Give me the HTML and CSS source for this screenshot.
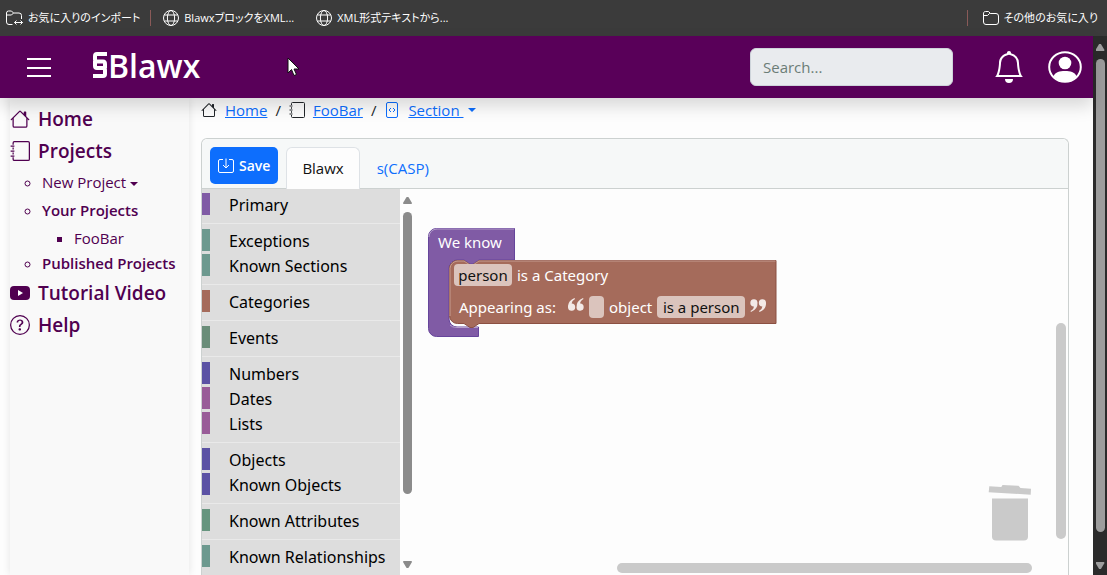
FILE: index.html
```html
<!DOCTYPE html>
<html lang="en">
<head>
<meta charset="utf-8">
<title>Blawx</title>
<link rel="stylesheet" href="styles.css">
</head>
<body>
<svg class="defs" aria-hidden="true">
  <symbol id="house" viewBox="0 0 16 16"><path d="M8.707 1.5a1 1 0 0 0-1.414 0L.646 8.146a.5.5 0 0 0 .708.708L2 8.207V13.500A1.500 1.500 0 0 0 3.500 15h9a1.500 1.500 0 0 0 1.500-1.500V8.207l.646.647a.5.5 0 0 0 .708-.708L13 5.793V2.500a.5.5 0 0 0-.5-.5h-1a.5.5 0 0 0-.5.5v1.293zM13 7.207V13.500a.5.5 0 0 1-.5.5h-9a.5.5 0 0 1-.5-.5V7.207l5-5z" fill="currentColor"/></symbol>
  <symbol id="journal" viewBox="0 0 16 16"><path d="M2.500 3V1.500a1 1 0 0 1 1-1h11a1 1 0 0 1 1 1v13a1 1 0 0 1-1 1h-11a1 1 0 0 1-1-1V13M2.500 5.200v1.600M2.500 9.200v1.600M.5 4h3M.5 8h3M.5 12h3" fill="none" stroke="currentColor"/></symbol>
  <symbol id="globe" viewBox="0 0 16 16"><g fill="none" stroke="currentColor"><circle cx="8" cy="8" r="7.500"/><ellipse cx="8" cy="8" rx="3.600" ry="7.500"/><path d="M1.300 5h13.400M1.300 11h13.400"/></g></symbol>
</svg>

<nav class="bookmarks" aria-label="Bookmarks">
  <a href="#" class="bookmark">
    <svg width="17" height="16" viewBox="0 0 17 16" fill="none" stroke="currentColor"><path d="M6.500 14.500H3A2.500 2.500 0 0 1 .5 12V3A2 2 0 0 1 2.500 1h3l2 2H13A2.500 2.500 0 0 1 15.500 5.500V9M.5 5h5l2-2M8.500 12.500h8M10.500 10.500l-2 2 2 2M14.500 10.500l2 2-2 2"/></svg>
    <span>お気に入りのインポート</span>
  </a>
  <span class="divider"></span>
  <a href="#" class="bookmark"><svg width="16" height="16"><use href="#globe"/></svg><span>BlawxブロックをXML...</span></a>
  <a href="#" class="bookmark spaced"><svg width="16" height="16"><use href="#globe"/></svg><span>XML形式テキストから...</span></a>
  <span class="divider last"></span>
  <a href="#" class="bookmark">
    <svg width="16" height="16" viewBox="0 0 16 16" fill="none" stroke="currentColor"><path d="M.5 4A2 2 0 0 1 2.500 1.500h3l2 2H13A2.500 2.500 0 0 1 15.500 6v6a2.500 2.500 0 0 1-2.500 2.500H3A2.500 2.500 0 0 1 .5 12zM.5 5.500h4l2-2h1"/></svg>
    <span>その他のお気に入り</span>
  </a>
</nav>

<div class="window">
  <div class="page">
    <header class="topbar">
      <button class="icon-button menu" aria-label="Menu"><svg width="24" height="20" viewBox="0 0 24 20" stroke="currentColor" stroke-width="2"><path d="M0 2h24M0 11h24M0 19h24"/></svg></button>
      <a href="#" class="brand">
        <svg width="16" height="26" viewBox="0 0 16 26" fill="none" stroke="currentColor" stroke-width="4"><path d="M15 2H5Q3 2 3 4V7.500Q3 9.500 5 9.500H11Q13 9.500 13 12V16M3 9V14Q3 16 5 16H11Q13 16 13 18V22Q13 24 11 24H1"/></svg>
        <span>Blawx</span>
      </a>
      <input class="search" type="search" placeholder="Search..." aria-label="Search">
      <button class="icon-button bell" aria-label="Notifications"><svg width="32" height="32" viewBox="0 0 16 16" fill="currentColor"><path d="M8 16a2 2 0 0 0 2-2H6a2 2 0 0 0 2 2M8 1.918l-.797.161A4 4 0 0 0 4 6c0 .628-.134 2.197-.459 3.742-.16.767-.376 1.566-.663 2.258h10.244c-.287-.692-.502-1.490-.663-2.258C12.134 8.197 12 6.628 12 6a4 4 0 0 0-3.203-3.920zM14.220 12c.223.447.481.801.780 1H1c.299-.199.557-.553.780-1C2.680 10.200 3 6.880 3 6c0-2.420 1.720-4.440 4.005-4.901a1 1 0 1 1 1.990 0A5 5 0 0 1 13 6c0 .880.320 4.200 1.220 6"/></svg></button>
      <button class="icon-button" aria-label="Account"><svg width="34" height="32" viewBox="0 0 34 32"><ellipse cx="17" cy="16" rx="15.800" ry="14.800" fill="none" stroke="currentColor" stroke-width="2"/><circle cx="17" cy="12" r="6.300" fill="currentColor"/><path d="M5.500 25c2-4 6-5 11.500-5s9.500 1 11.500 5c-3 4-7 5.500-11.500 5.500S8.500 29 5.500 25z" fill="currentColor"/></svg></button>
    </header>

    <div class="columns">
      <aside class="sidebar">
        <a href="#" class="side-link"><svg width="20" height="20"><use href="#house"/></svg>Home</a>
        <a href="#" class="side-link"><svg width="20" height="20"><use href="#journal"/></svg>Projects</a>
        <ul class="side-list">
          <li><a href="#">New Project<span class="caret"></span></a></li>
          <li><a href="#" class="strong">Your Projects</a>
            <ul class="side-sublist"><li><a href="#">FooBar</a></li></ul>
          </li>
          <li><a href="#" class="strong">Published Projects</a></li>
        </ul>
        <a href="#" class="side-link"><svg width="20" height="20" viewBox="0 0 20 20"><rect y="3" width="20" height="14" rx="4" fill="currentColor"/><path d="M8 7v6l5-3z" fill="#fff"/></svg>Tutorial Video</a>
        <a href="#" class="side-link"><svg width="20" height="20" viewBox="0 0 16 16" fill="currentColor"><path d="M8 15A7 7 0 1 1 8 1a7 7 0 0 1 0 14m0 1A8 8 0 1 0 8 0a8 8 0 0 0 0 16"/><path d="M5.255 5.786a.237.237 0 0 0 .241.247h.825c.138 0 .248-.113.266-.250.090-.656.540-1.134 1.342-1.134.686 0 1.314.343 1.314 1.168 0 .635-.374.927-.965 1.371-.673.489-1.206 1.060-1.168 1.987l.003.217a.250.250 0 0 0 .250.246h.811a.250.250 0 0 0 .250-.250v-.105c0-.718.273-.927 1.010-1.486.609-.463 1.244-.977 1.244-2.056 0-1.511-1.276-2.241-2.673-2.241-1.267 0-2.655.590-2.750 2.286m1.557 5.763c0 .533.425.927 1.010.927.609 0 1.028-.394 1.028-.927 0-.552-.420-.940-1.029-.940-.584 0-1.009.388-1.009.940"/></svg>Help</a>
      </aside>

      <main class="main">
        <nav class="crumbs" aria-label="Breadcrumb">
          <svg width="16" height="16"><use href="#house"/></svg><a href="#">Home</a>
          <span class="slash">/</span>
          <svg width="16" height="16"><use href="#journal"/></svg><a href="#">FooBar</a>
          <span class="slash">/</span>
          <svg class="blue" width="16" height="16" viewBox="0 0 16 16" fill="none" stroke="currentColor"><rect x="2.500" y=".5" width="11" height="15" rx="1.500"/><path d="M7 6L5 8l2 2M9 6l2 2-2 2"/></svg><a href="#">Section&nbsp;</a><span class="caret blue"></span>
        </nav>

        <section class="editor">
          <div class="tabs">
            <button class="save"><svg width="16" height="16" viewBox="0 0 16 16" fill="none" stroke="currentColor"><path d="M5 1.500H2A1.500 1.500 0 0 0 .5 3v10A1.500 1.500 0 0 0 2 14.500h12a1.500 1.500 0 0 0 1.500-1.500V3A1.500 1.500 0 0 0 14 1.500h-3M8 .5v9.500M5 7l3 3 3-3"/></svg>Save</button>
            <button class="tab active">Blawx</button>
            <button class="tab">s(CASP)</button>
          </div>
          <div class="work">
            <div class="toolbox">
              <ul class="group"><li class="purple">Primary</li></ul>
              <ul class="group"><li class="teal">Exceptions</li><li class="teal">Known Sections</li></ul>
              <ul class="group"><li class="brown">Categories</li></ul>
              <ul class="group"><li class="green">Events</li></ul>
              <ul class="group"><li class="indigo">Numbers</li><li class="plum">Dates</li><li class="plum">Lists</li></ul>
              <ul class="group"><li class="indigo">Objects</li><li class="indigo">Known Objects</li></ul>
              <ul class="group"><li class="mint">Known Attributes</li></ul>
              <ul class="group"><li class="teal">Known Relationships</li></ul>
            </div>
            <div class="toolbox-scroll" aria-hidden="true"><i class="up"></i><i class="thumb"></i><i class="down"></i></div>
            <div class="canvas">
              <div class="block">
                <svg class="shape" width="350" height="112" viewBox="0 0 350 112">
                  <path d="M.5 8.500a8 8 0 0 1 8-8H86.500V32H51l-6 4h-3l-6-4H29a8 8 0 0 0-8 8V91a8 8 0 0 0 8 8H50.500V108.500H8.500a8 8 0 0 1-8-8z" fill="#805ba5" stroke="#66459b"/>
                  <path d="M1 9a8 8 0 0 1 8-8H86M22 97q2 2.500 7 2.500H50" fill="none" stroke="#b39dc9"/>
                  <path d="M21.500 40.500a8 8 0 0 1 8-8H36l6 4h3l6-4H348V95.500H51l-6 4h-3l-6-4H29.500a8 8 0 0 1-8-8z" fill="#a56b5b" stroke="#8b5042"/>
                  <path d="M22 88V40.500a8 8 0 0 1 8-7.500H36l6 4h3l6-4H347.500" fill="none" stroke="#c59b90"/>
                </svg>
                <div class="block-row head">We know</div>
                <div class="block-row first"><input class="field name" value="person" aria-label="Category name"><span>is a Category</span></div>
                <div class="block-row second">
                  <span>Appearing as:</span>
                  <svg class="open-quote" width="16" height="14" viewBox="0 0 16 14"><g id="quotes" fill="#f3e9e6"><path d="M7 1Q3.500 3 3.700 5.500A3.600 3.600 0 1 1 0 9.500Q-.5 3 6.500 0z"/><path d="M15.500 1Q12 3 12.200 5.500A3.600 3.600 0 1 1 8.500 9.500Q8 3 15 0z"/></g></svg>
                  <input class="field blank" value="" aria-label="Prefix">
                  <span>object</span>
                  <input class="field suffix" value="is a person" aria-label="Suffix">
                  <svg width="16" height="14" viewBox="0 0 16 14"><use href="#quotes" transform="rotate(180 8 7)"/></svg>
                </div>
              </div>
              <svg class="trash" width="44" height="58" viewBox="0 0 44 58" fill="#cacaca"><path d="M1.300 2.200l12 .7 1.200-2 16 .9 2 2.300 10.500.6-.3 6-42-2.500z"/><path d="M4 14.500h36V52.500a4 4 0 0 1-4 4H8a4 4 0 0 1-4-4z"/></svg>
              <i class="bar-v"></i><i class="bar-h"></i>
            </div>
          </div>
        </section>
      </main>
    </div>
  </div>
  <div class="page-scroll" aria-hidden="true"><i class="up"></i><i class="thumb"></i><i class="down"></i></div>
</div>
<svg class="cursor" width="13" height="20" viewBox="0 0 13 20" aria-hidden="true"><path d="M1 1v15l3.500-3.500L7 18.500l2.500-1L7 12h5z" fill="#fff" stroke="#111"/></svg>
</body>
</html>
```
FILE: styles.css
```css
* { box-sizing: border-box; }
body {
  margin: 0;
  height: 100vh;
  display: flex;
  flex-direction: column;
  overflow: hidden;
  background: #2b2b2b;
  color: #212529;
  font: 15px/24px "Open Sans", "Noto Sans", sans-serif;
}
svg { flex: none; display: block; }
button, input { font: inherit; color: inherit; }
ul { margin: 0; padding: 0; list-style: none; }
.defs { position: absolute; width: 0; height: 0; }

.bookmarks {
  flex: none;
  height: 36px;
  padding: 0 9px 0 6px;
  display: flex;
  align-items: center;
  background: #3b3b3b;
  color: #fff;
  font: 11px/16px "Open Sans", "Noto Sans CJK JP", sans-serif;
  font-feature-settings: "palt";
}
.bookmark { display: flex; align-items: center; gap: 5px; color: #fff; text-decoration: none; white-space: nowrap; }
.spaced { margin-left: 22px; }
.divider { width: 1px; height: 16px; margin: 0 12px 0 10px; background: #8a5a58; }
.divider.last { margin: 0 15px 0 auto; }

.window { flex: 1; min-height: 0; display: flex; }
.page { flex: 1; min-width: 0; display: flex; flex-direction: column; background: #fdfdfd; }
.topbar {
  flex: none;
  position: relative;
  height: 62px;
  padding: 0 11px 0 27px;
  display: flex;
  align-items: center;
  background: #590059;
  color: #fff;
  box-shadow: 0 8px 16px rgba(0, 0, 0, .15);
}
.icon-button { padding: 0; border: 0; background: none; color: #fff; }
.brand { display: flex; align-items: center; margin-left: 41px; color: #fff; text-decoration: none; font-size: 32px; font-weight: 600; line-height: 40px; }
.brand svg { margin-bottom: 4px; }
.brand span { margin-bottom: 2px; }
.search { width: 203px; height: 38px; margin-left: auto; padding: 0 12px; border: 1px solid #ced4da; border-radius: 6px; background: #e9ebee; }
.search::placeholder { color: #6c7d77; opacity: 1; }
.bell { margin: 0 23px 0 40px; }

.columns { flex: 1; min-height: 0; display: flex; }
.sidebar { flex: none; width: 179px; margin-left: 10px; padding-top: 5px; background: #f9f9f9; color: #500050; box-shadow: 0 0 8px rgba(0, 0, 0, .1); }
.sidebar a { color: #500050; text-decoration: none; }
.side-link { display: flex; align-items: center; gap: 8px; height: 32px; font-size: 19px; font-weight: 600; }
.side-list { padding: 1px 0 0 32px; font-size: 15px; list-style: circle; }
.side-list > li { line-height: 28px; }
.side-list .strong { font-weight: 600; }
.side-sublist { padding-left: 32px; list-style: square; }
.side-sublist li { padding-top: 4px; line-height: 21px; }
.caret { display: inline-block; margin-left: 4px; border: 4px solid transparent; border-top-color: currentColor; border-bottom: 0; vertical-align: middle; }

.main { flex: 1; min-width: 0; padding: 0 24px 0 12px; display: flex; flex-direction: column; }
.crumbs { display: flex; align-items: center; gap: 8px; height: 24px; margin-bottom: 16px; }
.crumbs a, .blue { color: #0d6efd; }
.crumbs .caret { margin-left: -3px; }
.editor { flex: 1; min-height: 0; display: flex; flex-direction: column; border: 1px solid #ccd1d0; border-bottom: 0; border-radius: 6px 6px 0 0; }
.tabs { flex: none; display: flex; padding: 8px 8px 0; height: 50px; background: #f6f8f8; border-bottom: 1px solid #ccd1d0; border-radius: 6px 6px 0 0; }
.save { display: flex; align-items: center; gap: 5px; height: 37px; margin-right: 8px; padding: 0 8px; border: 0; border-radius: 5px; background: #0d6efd; color: #fff; font-size: 14px; font-weight: 600; }
.tab { height: 42px; padding: 0 16px 2px; border: 1px solid transparent; border-bottom: 0; background: none; color: #0d6efd; }
.tab.active { padding: 0 15px 2px; border-color: #dee2e6; border-radius: 6px 6px 0 0; background: #fdfdfd; color: #111; }

.work { flex: 1; min-height: 0; display: flex; }
.toolbox { flex: none; width: 198px; overflow: hidden; background: #ddd; color: #000; font: 16px/24px "Noto Sans", sans-serif; }
.group { padding: 5px 0; }
.group + .group { border-top: 1px solid #e9e9e9; }
.group:first-child { padding-top: 4px; }
.group li { height: 22px; margin-bottom: 3px; padding-left: 19px; border-left: 8px solid; white-space: nowrap; }
.group .purple { border-color: #805ba5; }
.group .teal { border-color: #6d998f; }
.group .brown { border-color: #a56b5b; }
.group .green { border-color: #6a8d79; }
.group .indigo { border-color: #5b52a4; }
.group .plum { border-color: #995c98; }
.group .mint { border-color: #66957f; }

.toolbox-scroll, .page-scroll { flex: none; display: flex; flex-direction: column; align-items: center; }
.toolbox-scroll { width: 15px; padding: 8px 0 7px; background: #fdfdfd; color: #8b8b8b; }
.page-scroll { width: 14px; padding: 8px 0 6px; border-radius: 0 8px 0 0; background: #2b2b2b; color: #9d9d9d; }
.up, .down { flex: none; width: 9px; height: 7px; background: currentColor; }
.up { clip-path: polygon(40% 0, 60% 0, 100% 85%, 95% 100%, 5% 100%, 0 85%); }
.down { clip-path: polygon(5% 0, 95% 0, 100% 15%, 60% 100%, 40% 100%, 0 15%); }
.thumb { width: 9px; border-radius: 5px; background: currentColor; }
.toolbox-scroll .thumb { height: 76%; margin: 8px 0 auto; }
.page-scroll .thumb { height: 90%; margin: 8px 0 auto; }

.canvas { flex: 1; min-width: 0; position: relative; color: #fff; font: 15px/22px "Noto Sans", sans-serif; }
.block { position: absolute; left: 13px; top: 39px; width: 350px; }
.shape { position: absolute; left: 0; top: 0; }
.block-row { position: relative; display: flex; align-items: center; height: 22px; white-space: nowrap; }
.head { margin: 3px 0 11px; padding-left: 10px; }
.first { padding-left: 26px; gap: 5px; margin-bottom: 10px; }
.second { padding-left: 31px; gap: 5px; }
.open-quote { margin-left: 7px; }
.block-row svg { margin-bottom: 4px; }
.block-row .shape { margin: 0; }
.field { height: 22px; padding: 0; border: 0; border-radius: 4px; background: #dbc4bd; color: #111; text-align: center; }
.name { width: 58px; }
.blank { width: 15px; }
.suffix { width: 88px; }
.trash { position: absolute; right: 36px; bottom: 33px; }
.bar-v { position: absolute; right: 2px; top: 134px; bottom: 36px; width: 10px; border-radius: 5px; background: #cacaca; }
.bar-h { position: absolute; left: 31%; right: 36px; bottom: 2px; height: 10px; border-radius: 5px; background: #cacaca; }
.cursor { position: absolute; left: 287px; top: 57px; }
```
